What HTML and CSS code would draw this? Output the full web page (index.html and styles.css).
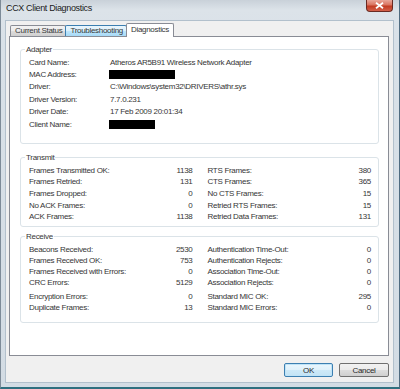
FILE: index.html
```html
<!DOCTYPE html>
<html>
<head>
  <title>CCX Client Diagnostics</title>
  <link rel="stylesheet" href="styles.css">
</head>
<body>
  <div class="window">
    <div class="titlebar">
      <span class="title">CCX Client Diagnostics</span>
      <span class="close-btn">
        <svg width="9" height="7" viewBox="0 0 9 7"><path d="M1 0.8 L8 6.2 M8 0.8 L1 6.2" stroke="#fff" stroke-width="1.8"/></svg>
      </span>
    </div>

    <div class="client">
      <div class="tabs">
        <div class="tab">Current Status</div>
        <div class="tab hover">Troubleshooting</div>
        <div class="tab active">Diagnostics</div>
      </div>

      <div class="panel">
        <fieldset class="group adapter">
          <legend>Adapter</legend>
          <div class="info-grid">
            <span>Card Name:</span><span>Atheros AR5B91 Wireless Network Adapter</span>
            <span>MAC Address:</span><span><i class="redact mac"></i></span>
            <span>Driver:</span><span>C:\Windows\system32\DRIVERS\athr.sys</span>
            <span>Driver Version:</span><span>7.7.0.231</span>
            <span>Driver Date:</span><span>17 Feb 2009 20:01:34</span>
            <span>Client Name:</span><span><i class="redact client-name"></i></span>
          </div>
        </fieldset>

        <fieldset class="group transmit">
          <legend>Transmit</legend>
          <div class="stat-grid">
            <div class="stat"><span>Frames Transmitted OK:</span><span>1138</span></div>
            <div class="stat"><span>RTS Frames:</span><span>380</span></div>
            <div class="stat"><span>Frames Retried:</span><span>131</span></div>
            <div class="stat"><span>CTS Frames:</span><span>365</span></div>
            <div class="stat"><span>Frames Dropped:</span><span>0</span></div>
            <div class="stat"><span>No CTS Frames:</span><span>15</span></div>
            <div class="stat"><span>No ACK Frames:</span><span>0</span></div>
            <div class="stat"><span>Retried RTS Frames:</span><span>15</span></div>
            <div class="stat"><span>ACK Frames:</span><span>1138</span></div>
            <div class="stat"><span>Retried Data Frames:</span><span>131</span></div>
          </div>
        </fieldset>

        <fieldset class="group receive">
          <legend>Receive</legend>
          <div class="stat-grid">
            <div class="stat"><span>Beacons Received:</span><span>2530</span></div>
            <div class="stat"><span>Authentication Time-Out:</span><span>0</span></div>
            <div class="stat"><span>Frames Received OK:</span><span>753</span></div>
            <div class="stat"><span>Authentication Rejects:</span><span>0</span></div>
            <div class="stat"><span>Frames Received with Errors:</span><span>0</span></div>
            <div class="stat"><span>Association Time-Out:</span><span>0</span></div>
            <div class="stat"><span>CRC Errors:</span><span>5129</span></div>
            <div class="stat"><span>Association Rejects:</span><span>0</span></div>
            <div class="stat spaced"><span>Encryption Errors:</span><span>0</span></div>
            <div class="stat spaced"><span>Standard MIC OK:</span><span>295</span></div>
            <div class="stat"><span>Duplicate Frames:</span><span>13</span></div>
            <div class="stat"><span>Standard MIC Errors:</span><span>0</span></div>
          </div>
        </fieldset>
      </div>

      <div class="buttons">
        <button class="btn default">OK</button>
        <button class="btn">Cancel</button>
      </div>
    </div>
  </div>
</body>
</html>
```

FILE: styles.css
```css
* {
  box-sizing: border-box;
  margin: 0;
  padding: 0;
}

body {
  font-family: "Liberation Sans", Arial, sans-serif;
  font-size: 8px;
  letter-spacing: -0.3px;
  color: #363636;
  background-color: #2f5f6f;
}

.window {
  width: 400px;
  height: 389px;
  display: flex;
  flex-direction: column;
  border-left: 1px solid #7d8b98;
  border-right: 1px solid #4f6b80;
  border-bottom: 2px solid #2f6f7f;
  background: linear-gradient(180deg, #c9d1d9 0%, #dce3e9 10px, #d9e1e8 40px, #d3dce4 100%);
}

.titlebar {
  height: 20px;
  display: flex;
  justify-content: space-between;
  align-items: flex-start;
  padding: 0 5px 0 5px;
}

.title {
  font-size: 9px;
  letter-spacing: -0.35px;
  line-height: 17px;
  color: #1a1a1a;
}

.close-btn {
  width: 27px;
  height: 12px;
  display: flex;
  align-items: center;
  justify-content: center;
  border: 1px solid #6a2a22;
  border-top: none;
  border-radius: 0 0 4px 4px;
  background: linear-gradient(180deg, #e9a79a 0%, #d9735f 45%, #c23b22 55%, #d3604a 100%);
  margin-right: 1px;
}

.client {
  flex: 1;
  margin: 0 5px 4px 4px;
  border: 1px solid #b2c0cc;
  background-color: #f0f0f0;
  padding: 2px 4px 5px 3px;
  display: flex;
  flex-direction: column;
}

.tabs {
  height: 13px;
  display: flex;
  align-items: flex-end;
  padding-left: 1px;
}

.tab {
  height: 11px;
  line-height: 10px;
  padding: 0 3px 0 4px;
  border: 1px solid #898c95;
  border-bottom: none;
  border-radius: 2px 2px 0 0;
  margin-right: -1px;
  background: linear-gradient(180deg, #f2f2f2 0%, #ebebeb 50%, #dddddd 51%, #cfcfcf 100%);
}

.tab.hover {
  border-color: #3c7fb1;
  background: linear-gradient(180deg, #eaf6fd 0%, #d9f0fc 50%, #bee6fd 51%, #a7d9f5 100%);
}

.tab.active {
  height: 14px;
  line-height: 12px;
  margin-bottom: -1px;
  padding: 0 4px;
  background: #fff;
  position: relative;
  z-index: 1;
}

.panel {
  height: 320px;
  background-color: #fff;
  border: 1px solid #898c95;
  padding: 8px 9px 0 10px;
}

.group {
  border: 1px solid #dbe3e8;
  border-radius: 3px;
  padding: 0 7px 0 8px;
}

.group legend {
  line-height: 9px;
  padding: 0 1px;
  margin-left: -4px;
}

.adapter {
  padding-top: 2px;
  padding-bottom: 13px;
}

.transmit {
  margin-top: 9px;
  padding-top: 2px;
  padding-bottom: 3px;
}

.receive {
  margin-top: 5px;
  padding-top: 3px;
  padding-bottom: 9px;
}

.info-grid {
  display: grid;
  grid-template-columns: 81px 1fr;
  grid-auto-rows: 12.4px;
  align-items: center;
}

.redact {
  display: inline-block;
  height: 9px;
  background-color: #000;
  vertical-align: middle;
  margin-left: -1px;
}

.redact.mac {
  width: 66px;
}

.redact.client-name {
  width: 46px;
}

.stat-grid {
  display: grid;
  grid-template-columns: 1fr 1fr;
  column-gap: 15px;
}

.stat {
  display: flex;
  justify-content: space-between;
  align-items: center;
}

.transmit .stat {
  height: 11.7px;
}

.receive .stat {
  height: 11px;
}

.receive .stat.spaced {
  margin-top: 3px;
}

.buttons {
  display: flex;
  justify-content: flex-end;
  gap: 6px;
  margin-top: 7px;
}

.btn {
  width: 49px;
  height: 14px;
  font-family: inherit;
  font-size: 8px;
  letter-spacing: -0.3px;
  color: #2a2a2a;
  border: 1px solid #707070;
  border-radius: 2px;
  background: linear-gradient(180deg, #f2f2f2 0%, #ebebeb 50%, #dddddd 51%, #cfcfcf 100%);
}

.btn + .btn {
  width: 50px;
}

.btn.default {
  border-color: #3c7fb1;
  box-shadow: inset 0 0 0 1px #bfe3f7;
  background: linear-gradient(180deg, #eaf6fd 0%, #dff1fb 50%, #cde9f8 51%, #c3e3f5 100%);
}
```
